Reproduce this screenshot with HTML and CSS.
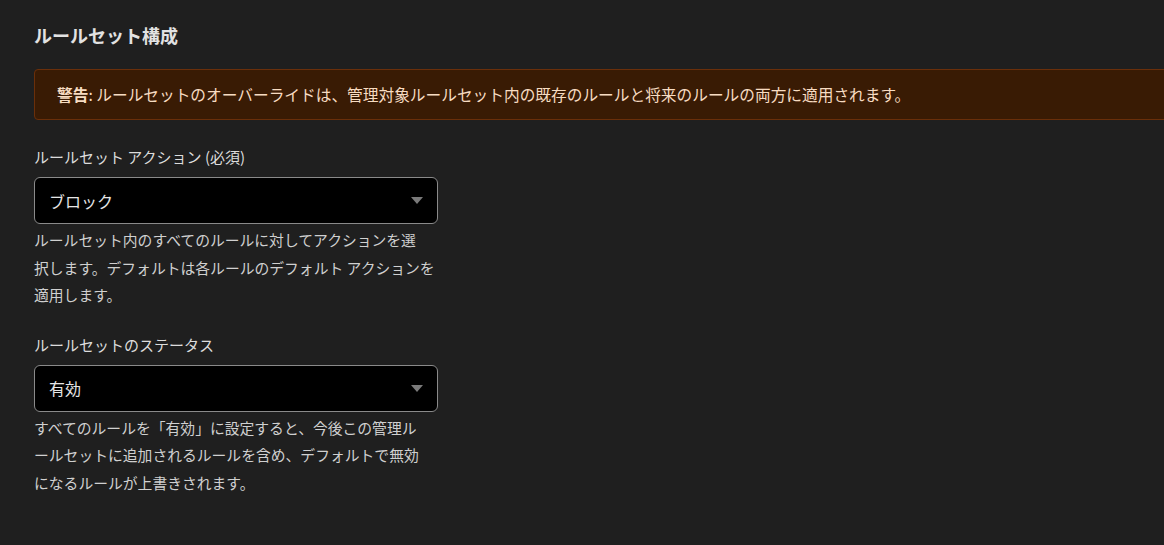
FILE: index.html
```html
<!DOCTYPE html>
<html lang="ja">
<head>
<meta charset="utf-8">
<title>ルールセット構成</title>
<link rel="stylesheet" href="styles.css">
</head>
<body>
<main class="page">
  <h2 class="title">ルールセット構成</h2>
  <div class="alert"><strong>警告</strong>: ルールセットのオーバーライドは、管理対象ルールセット内の既存のルールと将来のルールの両方に適用されます。</div>

  <div class="field">
    <label class="label">ルールセット アクション (必須)</label>
    <div class="select">
      <span class="value">ブロック</span>
      <span class="caret"></span>
    </div>
    <p class="help">ルールセット内のすべてのルールに対してアクションを選<br>択します。デフォルトは各ルールのデフォルト アクションを<br>適用します。</p>
  </div>

  <div class="field">
    <label class="label">ルールセットのステータス</label>
    <div class="select">
      <span class="value">有効</span>
      <span class="caret"></span>
    </div>
    <p class="help">すべてのルールを「有効」に設定すると、今後この管理ル<br>ールセットに追加されるルールを含め、デフォルトで無効<br>になるルールが上書きされます。</p>
  </div>
</main>
</body>
</html>
```

FILE: styles.css
```css
html, body {
  margin: 0;
  padding: 0;
  background: #1f1f1f;
  overflow: hidden;
}
body {
  font-family: "Noto Sans CJK JP", "Noto Sans", sans-serif;
  color: #d6d6d6;
  font-size: 15px;
}
.page {
  padding: 21px 0 0 34px;
  display: flex;
  flex-direction: column;
}
.title {
  margin: 0;
  font-size: 18px;
  line-height: 28px;
  font-weight: 700;
  color: #e2e2e2;
}
.alert {
  margin: 20px -40px 0 0;
  height: 51px;
  box-sizing: border-box;
  display: flex;
  align-items: center;
  padding: 0 0 0 22px;
  background: #391b04;
  border: 1px solid #6a2f0a;
  border-radius: 4px;
  color: #f7dcc2;
  font-size: 15.7px;
}
.alert strong {
  font-weight: 700;
}
.field {
  display: flex;
  flex-direction: column;
  width: 404px;
  margin-top: 25px;
}
.field + .field {
  margin-top: 24px;
}
.label {
  line-height: 24px;
  color: #dcdcdc;
  font-size: 15px;
}
.select {
  margin-top: 8px;
  height: 47px;
  box-sizing: border-box;
  border: 1px solid #8a8a8a;
  border-radius: 6px;
  background: #000;
  display: flex;
  align-items: center;
  justify-content: space-between;
  padding: 0 14px 0 14px;
  color: #e6e6e6;
  font-size: 16px;
}
.caret {
  width: 0;
  height: 0;
  border-left: 6px solid transparent;
  border-right: 6px solid transparent;
  border-top: 7px solid #7a7a7a;
}
.help {
  margin: 2px 0 0;
  line-height: 27.5px;
  font-size: 14.8px;
  color: #d0d0d0;
  white-space: nowrap;
}
```
